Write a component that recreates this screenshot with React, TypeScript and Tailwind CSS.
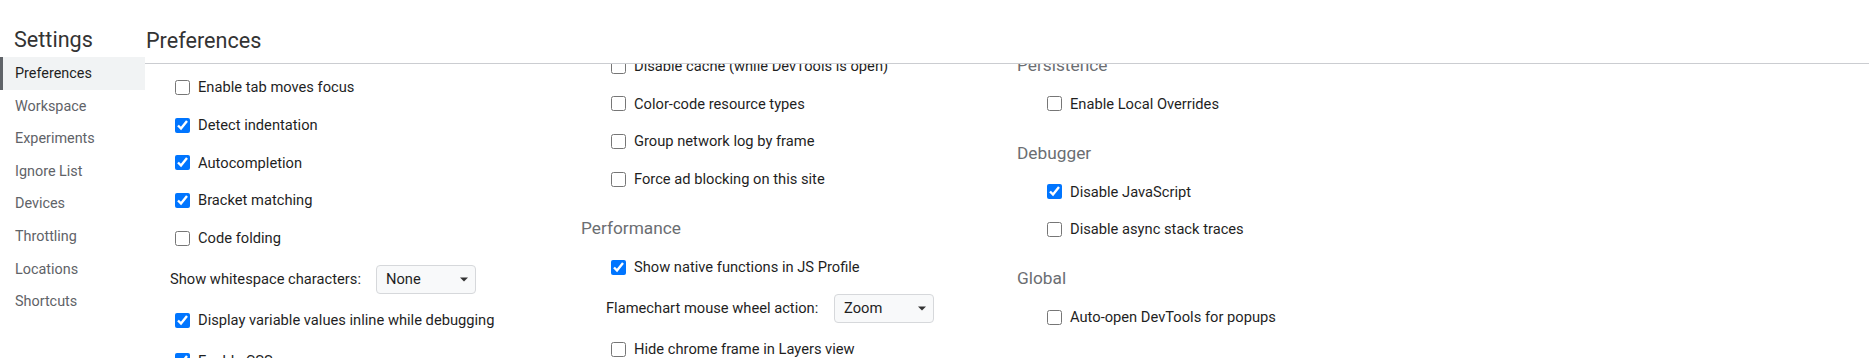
import React from "react";

const FONT = "font-['Segoe_UI',Roboto,sans-serif]";

const navItems = [
  "Preferences",
  "Workspace",
  "Experiments",
  "Ignore List",
  "Devices",
  "Throttling",
  "Locations",
  "Shortcuts",
];

function Check({ label, checked = false, extra = "" }: { label: string; checked?: boolean; extra?: string }) {
  return (
    <label className={`flex items-center h-[37.7px] pl-[30px] gap-[8px] text-[14.7px] text-[#1f1f1f] whitespace-nowrap ${extra}`}>
      <input
        type="checkbox"
        defaultChecked={checked}
        className="m-0 w-[15px] h-[15px] shrink-0 accent-[#0075ff]"
      />
      <span>{label}</span>
    </label>
  );
}

function SectionTitle({ title }: { title: string }) {
  return (
    <div className="h-[50.3px] pt-[20px] text-[17.3px] leading-[21.3px] text-[#6b6e72] whitespace-nowrap">
      {title}
    </div>
  );
}

function SelectRow({ label, value, labelWidth }: { label: string; value: string; labelWidth: string }) {
  return (
    <div className="flex items-center h-[44.3px] pl-[25px] text-[14.7px] text-[#1f1f1f] whitespace-nowrap">
      <span className={labelWidth}>{label}</span>
      <div className="flex items-center justify-between w-[100px] h-[29px] pl-[9px] pr-[7px] border border-[#d6d8db] rounded-[4px] bg-[#f8f9fa]">
        <span>{value}</span>
        <svg width="8" height="5" viewBox="0 0 8 5">
          <path d="M0 0.5h8L4 4.5z" fill="#333" />
        </svg>
      </div>
    </div>
  );
}

export default function App() {
  return (
    <div className={`${FONT} flex w-[1869px] h-[358px] overflow-hidden bg-white`}>
      {/* SIDEBAR */}
      <aside className="w-[145px] shrink-0 flex flex-col">
        <h1 className="h-[57px] pt-[26px] pl-[14px] text-[21.6px] leading-[27px] text-[#333]">
          Settings
        </h1>
        {navItems.map((item, i) => (
          <div
            key={item}
            className={`h-[32.6px] flex items-center pt-[1px] text-[14.4px] ${
              i === 0
                ? "bg-[#f1f3f4] border-l-[3px] border-[#5f6368] pl-[12px] text-[#1f1f1f]"
                : "pl-[15px] text-[#5f6368]"
            }`}
          >
            {item}
          </div>
        ))}
      </aside>

      {/* MAIN */}
      <main className="flex-1 flex flex-col min-w-0">
        <header className="h-[64px] shrink-0 border-b border-[#cbcdd1] pt-[27px] pl-[1px] text-[21.6px] leading-[27px] text-[#333]">
          Preferences
        </header>

        <div className="flex-1 flex overflow-hidden">
          {/* COLUMN 1 */}
          <div className="w-[436px] shrink-0 pt-[4.5px]">
            <Check label="Enable tab moves focus" />
            <Check label="Detect indentation" checked />
            <Check label="Autocompletion" checked />
            <Check label="Bracket matching" checked />
            <Check label="Code folding" />
            <SelectRow label="Show whitespace characters:" value="None" labelWidth="w-[206px]" />
            <Check label="Display variable values inline while debugging" checked />
            <Check label="Enable CSS source maps" checked extra="mt-[3px]" />
          </div>

          {/* COLUMN 2 */}
          <div className="w-[436px] shrink-0 -mt-[16.8px]">
            <Check label="Disable cache (while DevTools is open)" />
            <Check label="Color-code resource types" />
            <Check label="Group network log by frame" />
            <Check label="Force ad blocking on this site" />
            <SectionTitle title="Performance" />
            <Check label="Show native functions in JS Profile" checked />
            <SelectRow label="Flamechart mouse wheel action:" value="Zoom" labelWidth="w-[228px]" />
            <Check label="Hide chrome frame in Layers view" />
          </div>

          {/* COLUMN 3 */}
          <div className="w-[436px] shrink-0 -mt-[29.3px]">
            <SectionTitle title="Persistence" />
            <Check label="Enable Local Overrides" />
            <SectionTitle title="Debugger" />
            <Check label="Disable JavaScript" checked />
            <Check label="Disable async stack traces" />
            <SectionTitle title="Global" />
            <Check label="Auto-open DevTools for popups" />
          </div>
        </div>
      </main>
    </div>
  );
}
